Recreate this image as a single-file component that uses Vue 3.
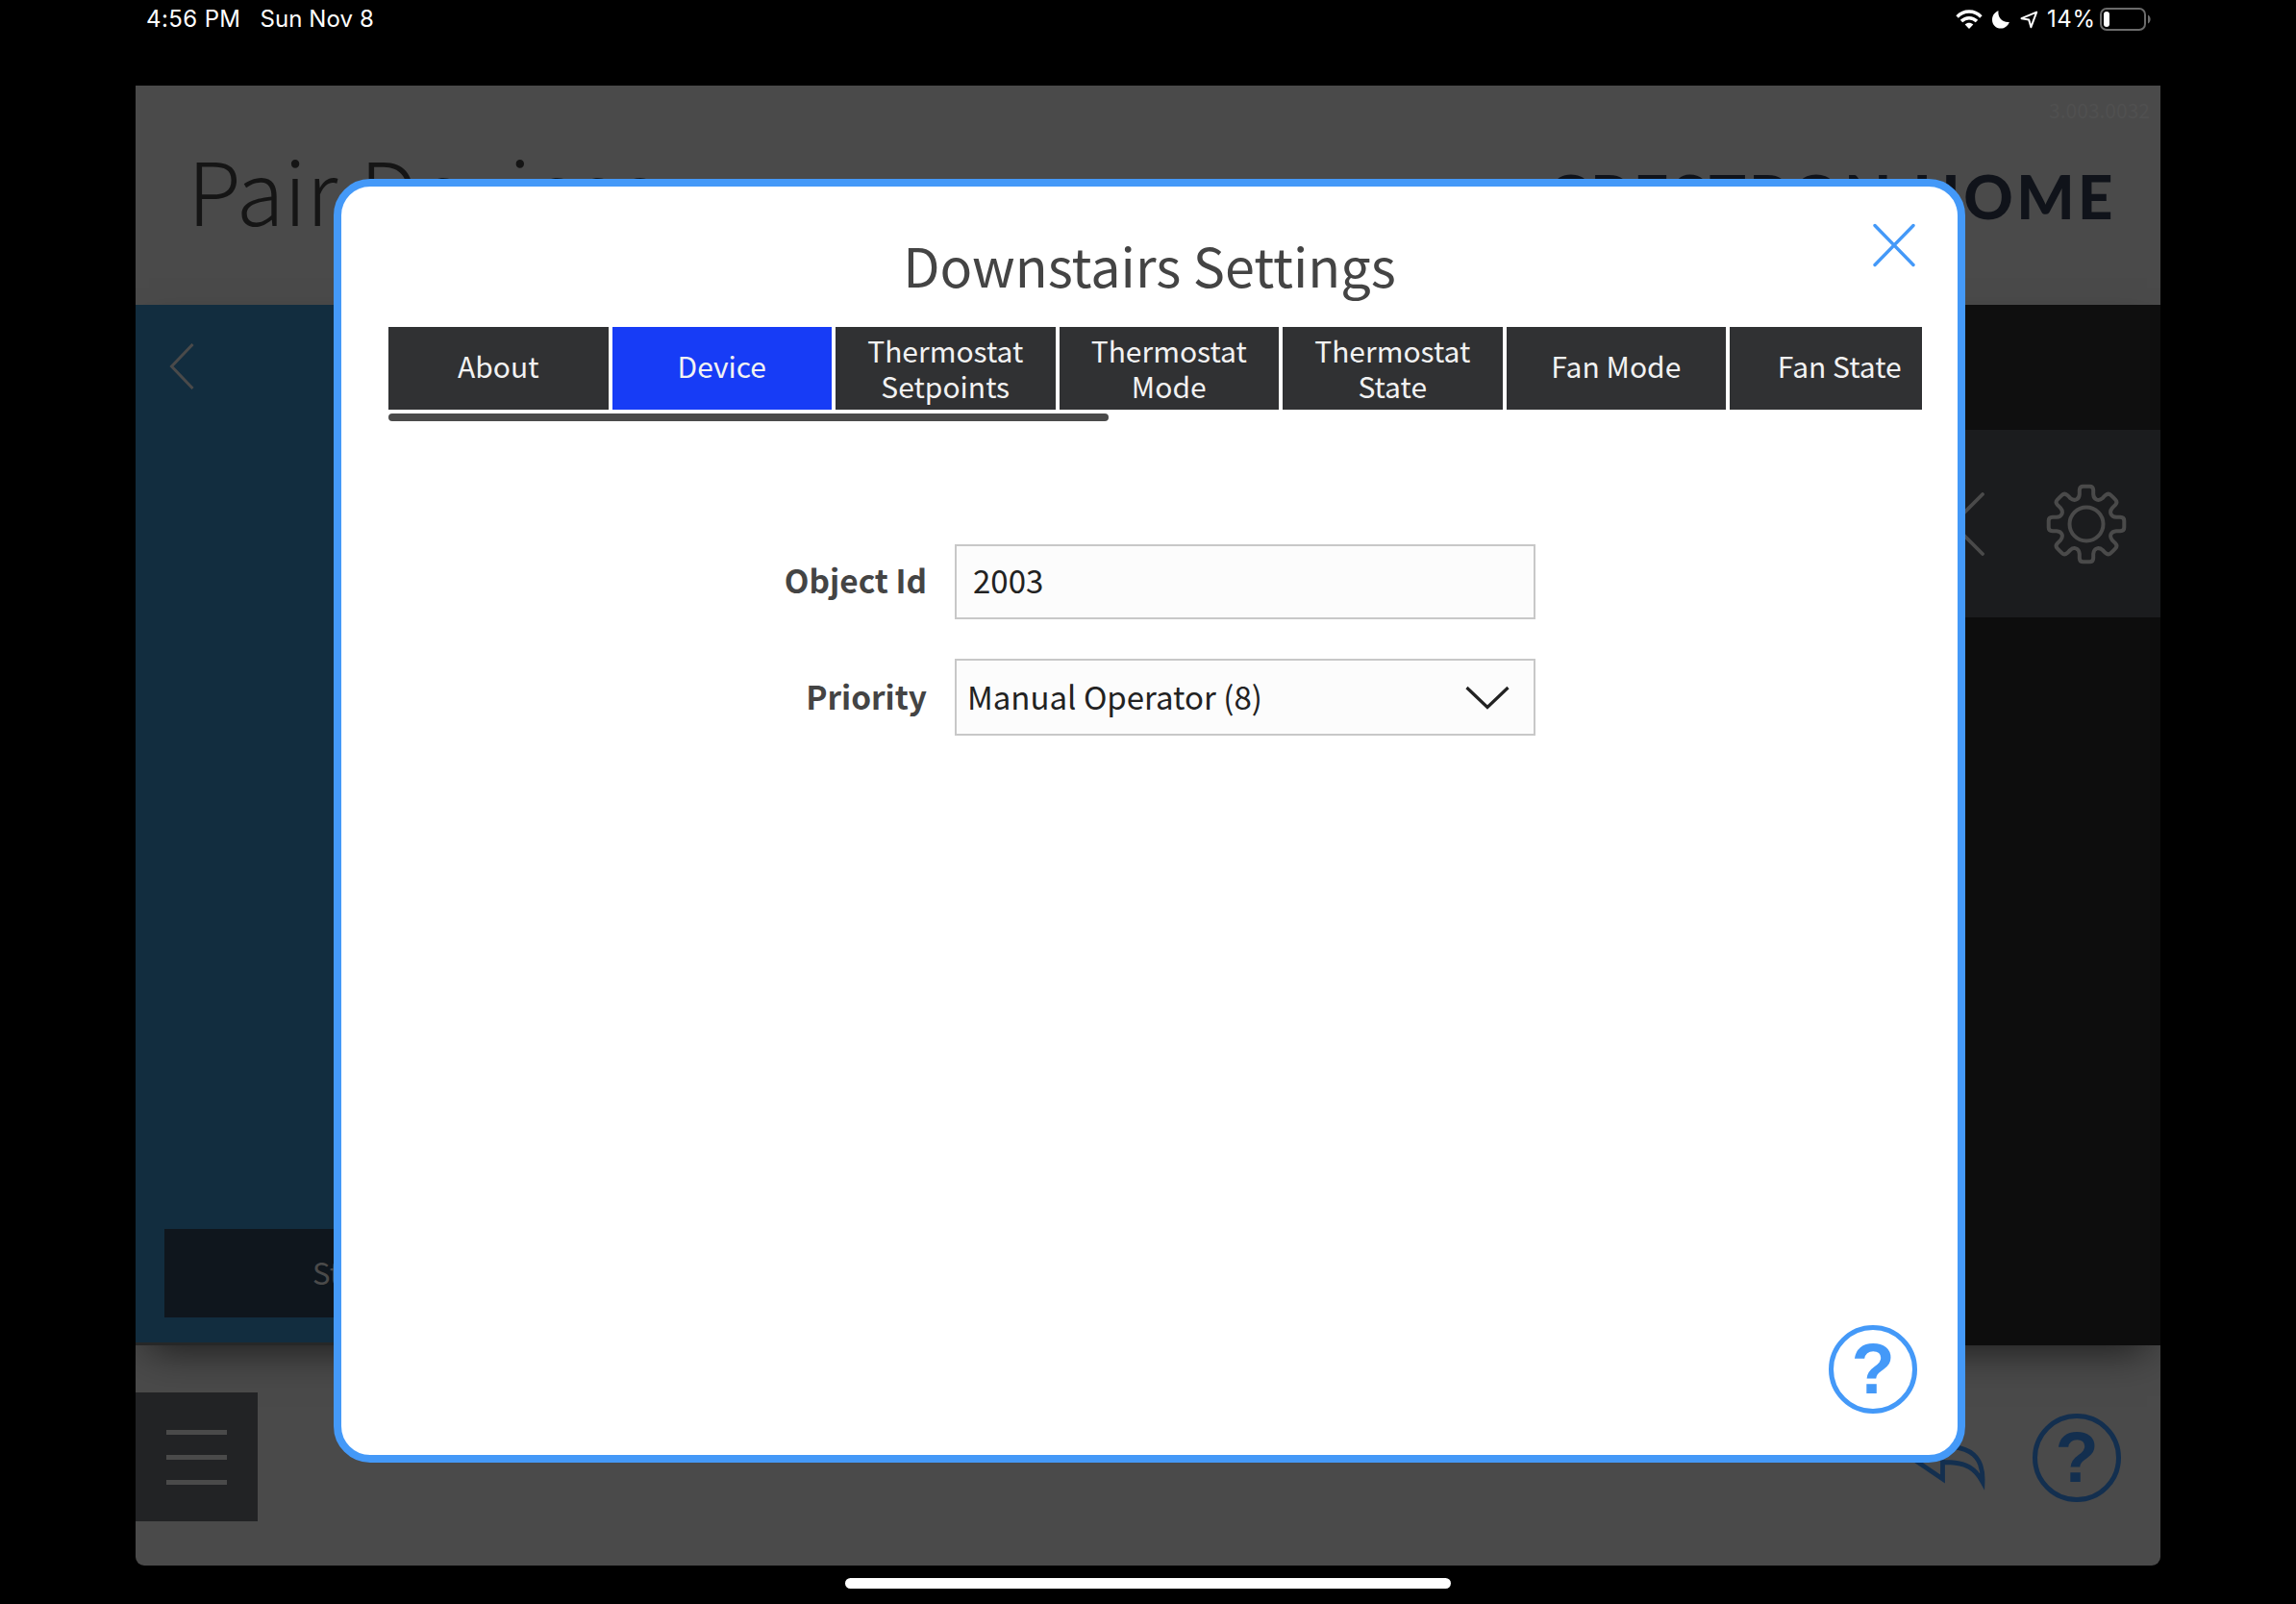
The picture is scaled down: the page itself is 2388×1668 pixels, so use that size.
<script setup>
const tabs = [
  { lines: ['About'] },
  { lines: ['Device'], active: true },
  { lines: ['Thermostat', 'Setpoints'] },
  { lines: ['Thermostat', 'Mode'] },
  { lines: ['Thermostat', 'State'] },
  { lines: ['Fan Mode'] },
  { lines: ['Fan State'] },
]

// One tooth of the gear outline, repeated around the centre.
const tooth = [
  [-7.5, -26.8], [-7.2, -31],
  [-7.2, -33], [-7.2, -35.3],
  [-7, -39.3], [-3.4, -39.3],
  [0, -39.3], [3.4, -39.3],
  [7, -39.3], [7.2, -35.3],
  [7.2, -33], [7.2, -31],
  [7.5, -26.8], [10.56, -25.5],
]
const spin = ([x, y], a) =>
  `${(x * Math.cos(a) - y * Math.sin(a)).toFixed(2)} ${(x * Math.sin(a) + y * Math.cos(a)).toFixed(2)}`
let gear = `M${spin([-10.56, -25.5], 0)}`
for (let i = 0; i < 8; i++) {
  const a = (i * Math.PI) / 4
  for (let p = 0; p < tooth.length; p += 2) gear += `Q${spin(tooth[p], a)} ${spin(tooth[p + 1], a)}`
}
gear += 'Z'
</script>

<template>
  <div class="screen">
    <header class="status">
      <div class="status-left">
        <span class="time">4:56 PM</span>
        <span class="date">Sun Nov 8</span>
      </div>
      <div class="status-right">
        <svg class="wifi" width="28" height="20" viewBox="0 0 28 20">
          <g fill="none" stroke="#fff" stroke-width="3.5">
            <path d="M1.6 7.4C8.6.3 19.4.3 26.4 7.4" />
            <path d="M6 12c4.600-4.500 11.400-4.500 16 0" />
          </g>
          <path d="M9.700 15.600c2.400-2.400 6.200-2.400 8.600 0L14 20z" fill="#fff" />
        </svg>
        <svg class="moon" width="18" height="19" viewBox="0 0 18 19">
          <path d="M6.500.3C5.500 6.800 10.400 12.700 17.800 12 16.400 16 13 18.600 9 18.600 4 18.600 0 14.700 0 9.700 0 5.300 2.600 1.600 6.500.3z" fill="#fff" />
        </svg>
        <svg class="locate" width="19" height="19" viewBox="0 0 19 19">
          <path d="M17.200 1.600 1.500 8.200l7.700 1.400 2.200 7.600z" fill="none" stroke="#fff" stroke-width="2" stroke-linejoin="round" />
        </svg>
        <span class="percent">14%</span>
        <svg class="battery" width="53" height="24" viewBox="0 0 53 24">
          <rect x="1" y="1" width="46" height="22" rx="6" fill="none" stroke="#6b6b6b" stroke-width="2" />
          <rect x="4" y="4" width="6" height="16" rx="3" fill="#fff" />
          <path d="M50 7.500c3.500 1.800 3.500 7.200 0 9z" fill="#6b6b6b" />
        </svg>
      </div>
    </header>

    <main class="app">
      <div class="topbar">
        <h1>Pair Devices</h1>
        <div class="brand">
          <div class="version">3.003.0032</div>
          <div class="logo">CRESTRON HOME</div>
        </div>
      </div>

      <div class="content">
        <aside class="side">
          <svg width="28" height="50" viewBox="0 0 28 50">
            <path d="M25.500 2 3.500 25l22 23" fill="none" stroke="#4a4a4a" stroke-width="3" />
          </svg>
          <div class="start">Start Discovery</div>
        </aside>
        <section class="list">
          <div class="list-head"></div>
          <div class="row">
            <svg width="66" height="66" viewBox="0 0 66 66">
              <path d="M2 2l62 62M64 2 2 64" fill="none" stroke="#4a4a4a" stroke-width="3.800" stroke-linecap="round" />
            </svg>
            <svg class="gear" width="84" height="84" viewBox="-42 -42 84 84">
              <g fill="none" stroke="#4a4a4a" stroke-width="4">
                <path :d="gear" />
                <circle r="17.500" />
              </g>
            </svg>
          </div>
        </section>
      </div>

      <footer class="bottombar">
        <div class="menu"><i></i><i></i><i></i></div>
        <div class="tools">
          <svg width="98" height="80" viewBox="1970 1470 98 80">
            <path d="M2019.500 1518V1538L1974 1507l45.500-33V1504.500C2049 1503 2062 1516 2061 1541 2054 1528 2045 1520 2019.500 1520.500z" fill="none" stroke="#132f4f" stroke-width="4.800" />
          </svg>
          <div class="help dim">?</div>
        </div>
      </footer>
    </main>

    <div class="home"></div>

    <div class="modal">
      <svg class="close" width="46" height="46" viewBox="0 0 46 46">
        <path d="M3 2.500l40 41M43 2.500l-40 41" fill="none" stroke="#4499f8" stroke-width="3.400" stroke-linecap="round" />
      </svg>
      <h2>Downstairs Settings</h2>
      <nav class="tabs">
        <div v-for="(t, i) in tabs" :key="i" class="tab" :class="{ active: t.active, single: t.lines.length === 1 }">
          <span v-for="l in t.lines" :key="l">{{ l }}</span>
        </div>
      </nav>
      <div class="scroll"></div>
      <div class="form">
        <div class="field">
          <label>Object Id</label>
          <div class="box input">2003</div>
        </div>
        <div class="field priority">
          <label>Priority</label>
          <div class="box select">
            <span>Manual Operator (8)</span>
            <svg width="48" height="26" viewBox="0 0 48 26">
              <path d="M2.500 2 24 22.500 45.500 2" fill="none" stroke="#222" stroke-width="3.200" />
            </svg>
          </div>
        </div>
      </div>
      <div class="help modal-help">?</div>
    </div>
  </div>
</template>

<style>
html,
body {
  margin: 0;
  background: #000;
}
</style>

<style scoped>
.screen {
  position: relative;
  width: 2388px;
  height: 1668px;
  overflow: hidden;
  background: #000;
  font-family: "Noto Sans CJK SC", "Noto Sans", sans-serif;
  box-sizing: border-box;
}
.screen * {
  box-sizing: border-box;
}
h1,
h2 {
  margin: 0;
  font-weight: 400;
}
svg {
  display: block;
  flex: none;
}
.status {
  display: flex;
  justify-content: space-between;
  height: 89px;
  padding: 0 151px 0 152px;
  color: #fff;
  font: 400 24px/40px Inter, sans-serif;
}
.status-left {
  display: flex;
  gap: 20px;
}
.time {
  letter-spacing: 0.4px;
}
.date {
  letter-spacing: 0.1px;
}
.status-right {
  display: flex;
  align-items: center;
  height: 40px;
}
.moon {
  margin-left: 10px;
}
.locate {
  margin-left: 11px;
}
.percent {
  margin-left: 9px;
  width: 50px;
  letter-spacing: 0.6px;
}
.battery {
  margin-left: 5px;
}
.app {
  display: flex;
  flex-direction: column;
  width: 2106px;
  height: 1539px;
  margin-left: 141px;
  background: #4a4a4a;
  border-radius: 0 0 9px 9px;
  overflow: hidden;
}
.topbar {
  display: flex;
  justify-content: space-between;
  height: 228px;
  flex: none;
}
h1 {
  padding-left: 54px;
  margin-top: 46px;
  height: 120px;
  font-size: 91px;
  line-height: 120px;
  font-weight: 300;
  letter-spacing: -0.2px;
  word-spacing: 3px;
  color: #151515;
  white-space: nowrap;
}
.brand {
  text-align: right;
  white-space: nowrap;
}
.version {
  padding: 10px 11px 0 0;
  height: 46px;
  font-size: 21px;
  line-height: 30px;
  color: #505050;
}
.logo {
  padding-right: 46px;
  font: 900 63.500px/90px Lato, sans-serif;
  letter-spacing: 3.500px;
  margin-top: 24px;
  color: #10131a;
}
.content {
  display: flex;
  height: 1082px;
  flex: none;
  box-shadow: 0 18px 40px -14px rgba(0, 0, 0, 0.65);
}
.side {
  display: flex;
  flex-direction: column;
  justify-content: space-between;
  width: 700px;
  padding: 39px 30px 26px 30px;
  background: #122d3f;
  border-bottom: 3px solid #262727;
}
.side svg {
  margin-left: 4px;
}
.start {
  height: 92px;
  padding-left: 154px;
  background: #0f161d;
  color: #4a4a4a;
  font-size: 31px;
  line-height: 89px;
}
.list {
  flex: 1;
  background: #0d0d0d;
}
.list-head {
  height: 130px;
  background: #0f0f0f;
}
.row {
  display: flex;
  justify-content: flex-end;
  align-items: center;
  gap: 64px;
  height: 195px;
  padding-right: 35px;
  background: #1b1c1e;
}
.bottombar {
  display: flex;
  justify-content: space-between;
  padding-top: 49px;
}
.menu {
  display: flex;
  flex-direction: column;
  justify-content: center;
  gap: 21px;
  width: 127px;
  height: 134px;
  padding-left: 32px;
  background: #222325;
}
.menu i {
  width: 63px;
  height: 5px;
  background: #4a4a4a;
}
.tools {
  display: flex;
  align-items: flex-start;
  padding: 22px 41px 0 0;
  gap: 45px;
}
.help {
  width: 92px;
  height: 92px;
  border: 5px solid #4499f8;
  border-radius: 50%;
  color: #4499f8;
  font: 700 74px/82px "Liberation Sans", sans-serif;
  text-align: center;
}
.dim {
  border-color: #132f4f;
  color: #132f4f;
}
.home {
  width: 630px;
  height: 11px;
  margin: 13px auto 0;
  border-radius: 6px;
  background: #fff;
}
.modal {
  position: absolute;
  left: 347px;
  top: 186px;
  width: 1697px;
  height: 1335px;
  border: 8px solid #4499f8;
  border-radius: 38px;
  background: #fff;
}
.close {
  position: absolute;
  right: 43px;
  top: 38px;
}
h2 {
  height: 146px;
  padding-top: 40px;
  font-size: 55.700px;
  line-height: 82px;
  text-align: center;
  color: #444;
}
.tabs {
  display: flex;
  gap: 4px;
  width: 1594.500px;
  height: 86px;
  margin-left: 49px;
  overflow: hidden;
}
.tab {
  display: flex;
  flex: none;
  flex-direction: column;
  justify-content: center;
  align-items: center;
  width: 228.500px;
  padding-bottom: 1px;
  background: #303133;
  color: #f2f2f2;
  font-size: 30px;
  line-height: 37px;
  white-space: nowrap;
}
.tab.single {
  padding-bottom: 6px;
}
.tab.active {
  background: #173cf6;
}
.scroll {
  width: 749px;
  height: 8px;
  margin: 4px 0 0 49px;
  border-radius: 4px;
  background: #4a4a4a;
}
.form {
  display: flex;
  flex-direction: column;
  gap: 41px;
  margin: 128px 0 0 238px;
}
.field {
  display: flex;
  align-items: center;
  gap: 29px;
}
label {
  width: 371px;
  padding-bottom: 4px;
  text-align: right;
  font-size: 33.400px;
  line-height: 48px;
  font-weight: 700;
  color: #444;
}
.priority label {
  padding-bottom: 2px;
}
.box {
  width: 604px;
  height: 78px;
  border: 2px solid #c8c8c8;
  background: #fcfcfc;
  font-size: 33px;
  line-height: 71px;
  color: #222;
}
.input {
  padding-left: 17px;
}
.select {
  display: flex;
  justify-content: space-between;
  height: 80px;
  line-height: 75px;
  padding: 0 24px 0 11px;
}
.select svg {
  margin-top: 26px;
}
.modal-help {
  position: absolute;
  right: 42px;
  bottom: 43px;
}
</style>
